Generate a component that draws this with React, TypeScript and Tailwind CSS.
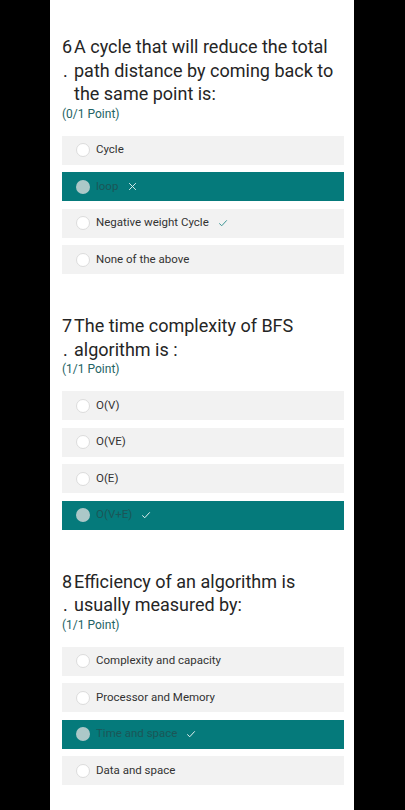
import React from "react";

interface Option {
  label: string;
  selected?: boolean;
  mark?: "check" | "cross";
}

interface Question {
  num: number;
  lines: string[];
  points: string;
  options: Option[];
}

const questions: Question[] = [
  {
    num: 6,
    lines: ["A cycle that will reduce the total", "path distance by coming back to", "the same point is:"],
    points: "(0/1 Point)",
    options: [
      { label: "Cycle" },
      { label: "loop", selected: true, mark: "cross" },
      { label: "Negative weight Cycle", mark: "check" },
      { label: "None of the above" },
    ],
  },
  {
    num: 7,
    lines: ["The time complexity of BFS", "algorithm is :"],
    points: "(1/1 Point)",
    options: [
      { label: "O(V)" },
      { label: "O(VE)" },
      { label: "O(E)" },
      { label: "O(V+E)", selected: true, mark: "check" },
    ],
  },
  {
    num: 8,
    lines: ["Efficiency of an algorithm is", "usually measured by:"],
    points: "(1/1 Point)",
    options: [
      { label: "Complexity and capacity" },
      { label: "Processor and Memory" },
      { label: "Time and space", selected: true, mark: "check" },
      { label: "Data and space" },
    ],
  },
];

const CheckIcon = ({ className }: { className: string }) => (
  <svg viewBox="0 0 12 12" className={className} fill="none" stroke="currentColor" strokeWidth="1.2">
    <path d="M1.5 6.5 L4.5 9.3 L10.5 2.8" />
  </svg>
);

const CrossIcon = ({ className }: { className: string }) => (
  <svg viewBox="0 0 12 12" className={className} fill="none" stroke="currentColor" strokeWidth="1.3">
    <path d="M1.5 1.5 L10.5 10.5 M10.5 1.5 L1.5 10.5" />
  </svg>
);

const OptionRow = ({ option }: { option: Option }) => {
  if (option.selected) {
    return (
      <div className="h-[29px] bg-[#057a7b] flex items-center pl-[14px]">
        <span className="w-[14px] h-[14px] rounded-full bg-[#acc8c8] shrink-0"></span>
        <span className="ml-[6px] text-[11.5px] text-[#1b5657]">{option.label}</span>
        {option.mark === "cross" ? (
          <CrossIcon className="ml-[10px] w-[9px] h-[9px] text-[#d7ecec]" />
        ) : (
          <CheckIcon className="ml-[9px] w-[10px] h-[10px] text-[#e6f3f3]" />
        )}
      </div>
    );
  }
  return (
    <div className="h-[29px] bg-[#f2f2f2] flex items-center pl-[14px]">
      <span className="w-[14px] h-[14px] rounded-full bg-white border border-[#dcdcdc] shrink-0"></span>
      <span className="ml-[6px] text-[11.5px] text-[#333333]">{option.label}</span>
      {option.mark === "check" && (
        <CheckIcon className="ml-[9px] w-[10px] h-[10px] text-[#3d9595]" />
      )}
    </div>
  );
};

const App = () => {
  return (
    <div className="w-[405px] h-[810px] bg-black overflow-hidden" style={{ fontFamily: "Roboto, 'Noto Sans', sans-serif" }}>
      <div className="ml-[50px] w-[304px] h-full bg-white pl-[12px] pr-[10px] pt-[35px] flex flex-col gap-[40px]">
        {questions.map((q) => (
          <div key={q.num} className="flex flex-col">
            <div className="flex text-[18px] leading-[23.5px] text-[#252525]">
              <div className="w-[12px] shrink-0 flex flex-col">
                <span>{q.num}</span>
                <span className="pl-[1px]">.</span>
              </div>
              <div className="flex flex-col">
                {q.lines.map((line, i) => (
                  <span key={i} className="whitespace-nowrap">{line}</span>
                ))}
              </div>
            </div>
            <div className="text-[12px] leading-[16px] text-[#246364]">{q.points}</div>
            <div className="mt-[14px] flex flex-col gap-[7.5px]">
              {q.options.map((o, i) => (
                <OptionRow key={i} option={o} />
              ))}
            </div>
          </div>
        ))}
      </div>
    </div>
  );
};

export default App;
